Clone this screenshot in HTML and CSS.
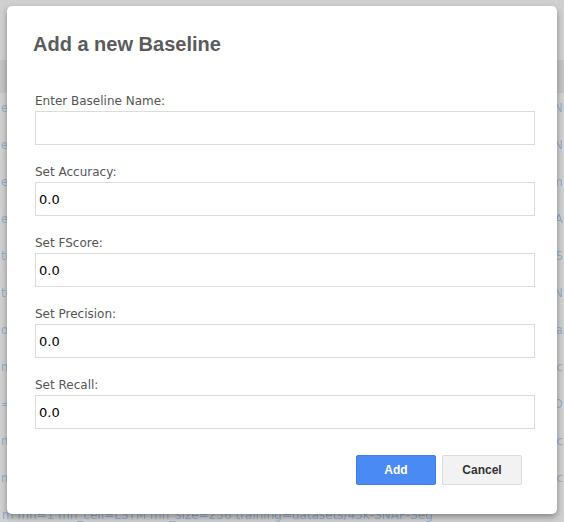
FILE: index.html
```html
<!DOCTYPE html>
<html>
<head>
<meta charset="utf-8">
<link rel="stylesheet" href="styles.css">
</head>
<body>
<div class="page">
  <div class="page-header"></div>
  <div class="rows">
    <div class="row"><span>e=</span><span>N</span></div>
    <div class="row"><span>e=</span><span>N</span></div>
    <div class="row"><span>e=</span><span>m</span></div>
    <div class="row"><span>e=</span><span>A</span></div>
    <div class="row"><span>te</span><span>S</span></div>
    <div class="row"><span>te</span><span>N</span></div>
    <div class="row"><span>or</span><span>a</span></div>
    <div class="row"><span>m</span><span>c</span></div>
    <div class="row"><span>=:</span><span>D</span></div>
    <div class="row"><span>m</span><span>c</span></div>
    <div class="row"><span>m</span><span>c</span></div>
  </div>
  <div class="footer-row">m  mn=1 mn_cell=LSTM mn_size=256 training=datasets/43k-SNAP-Seg</div>
</div>

<div class="dialog">
  <h2 class="dialog-title">Add a new Baseline</h2>
  <form class="form">
    <label class="field">
      <span class="field-label">Enter Baseline Name:</span>
      <input class="field-input" type="text" value="">
    </label>
    <label class="field">
      <span class="field-label">Set Accuracy:</span>
      <input class="field-input" type="text" value="0.0">
    </label>
    <label class="field">
      <span class="field-label">Set FScore:</span>
      <input class="field-input" type="text" value="0.0">
    </label>
    <label class="field">
      <span class="field-label">Set Precision:</span>
      <input class="field-input" type="text" value="0.0">
    </label>
    <label class="field">
      <span class="field-label">Set Recall:</span>
      <input class="field-input" type="text" value="0.0">
    </label>
    <div class="actions">
      <button type="button" class="btn btn-primary">Add</button>
      <button type="button" class="btn btn-default">Cancel</button>
    </div>
  </form>
</div>
</body>
</html>
```

FILE: styles.css
```css
html, body {
  margin: 0;
  padding: 0;
}
body {
  width: 564px;
  height: 522px;
  overflow: hidden;
  background: #d0d0d0;
  position: relative;
  font-family: "DejaVu Sans", Verdana, sans-serif;
}
.page {
  height: 522px;
  display: flex;
  flex-direction: column;
}
.page-header {
  margin-top: 60px;
  height: 33px;
  background: #c4c4c4;
}
.rows {
  display: flex;
  flex-direction: column;
  gap: 23px;
  padding-top: 8px;
  filter: blur(0.6px);
}
.row {
  display: flex;
  justify-content: space-between;
  color: #92aed0;
  font-size: 12px;
  line-height: 14px;
  padding: 0 1px;
}
.footer-row {
  margin-top: auto;
  color: #92aed0;
  font-size: 12px;
  line-height: 14px;
  white-space: nowrap;
  overflow: hidden;
  filter: blur(0.6px);
  padding-left: 2px;
  margin-bottom: 0;
}

.dialog {
  position: absolute;
  left: 7px;
  top: 6px;
  width: 550px;
  height: 508px;
  box-sizing: border-box;
  background: #fff;
  border-radius: 5px;
  box-shadow: 0 3px 6px rgba(0, 0, 0, 0.35);
  padding: 0 22px 0 28px;
}
.dialog-title {
  margin: 0;
  padding: 27px 0 0 0;
  margin-left: -2px;
  font-family: "Liberation Sans", Arial, sans-serif;
  font-size: 20px;
  line-height: 22px;
  font-weight: bold;
  color: #5b5b5b;
}
.form {
  display: flex;
  flex-direction: column;
  margin-top: 39px;
}
.field {
  display: flex;
  flex-direction: column;
  margin-bottom: 20px;
}
.field-label {
  font-size: 12px;
  line-height: 14px;
  color: #555;
  margin-bottom: 3px;
}
.field-input {
  width: 500px;
  height: 34px;
  box-sizing: border-box;
  border: 1px solid #dcdcdc;
  border-radius: 0;
  padding: 0 3px;
  font-family: "DejaVu Sans", Verdana, sans-serif;
  font-size: 13px;
  color: #000;
  background: #fff;
  outline: none;
}
.actions {
  display: flex;
  justify-content: flex-end;
  gap: 6px;
  margin-top: 6px;
  padding-right: 13px;
}
.btn {
  width: 80px;
  height: 30px;
  border-radius: 2px;
  font-family: "Liberation Sans", Arial, sans-serif;
  font-size: 12px;
  font-weight: bold;
  cursor: pointer;
}
.btn-primary {
  background: #4a8af4;
  border: 1px solid #3f7fe8;
  color: #fff;
}
.btn-default {
  background: #f2f2f2;
  border: 1px solid #dcdcdc;
  color: #333;
}
```
